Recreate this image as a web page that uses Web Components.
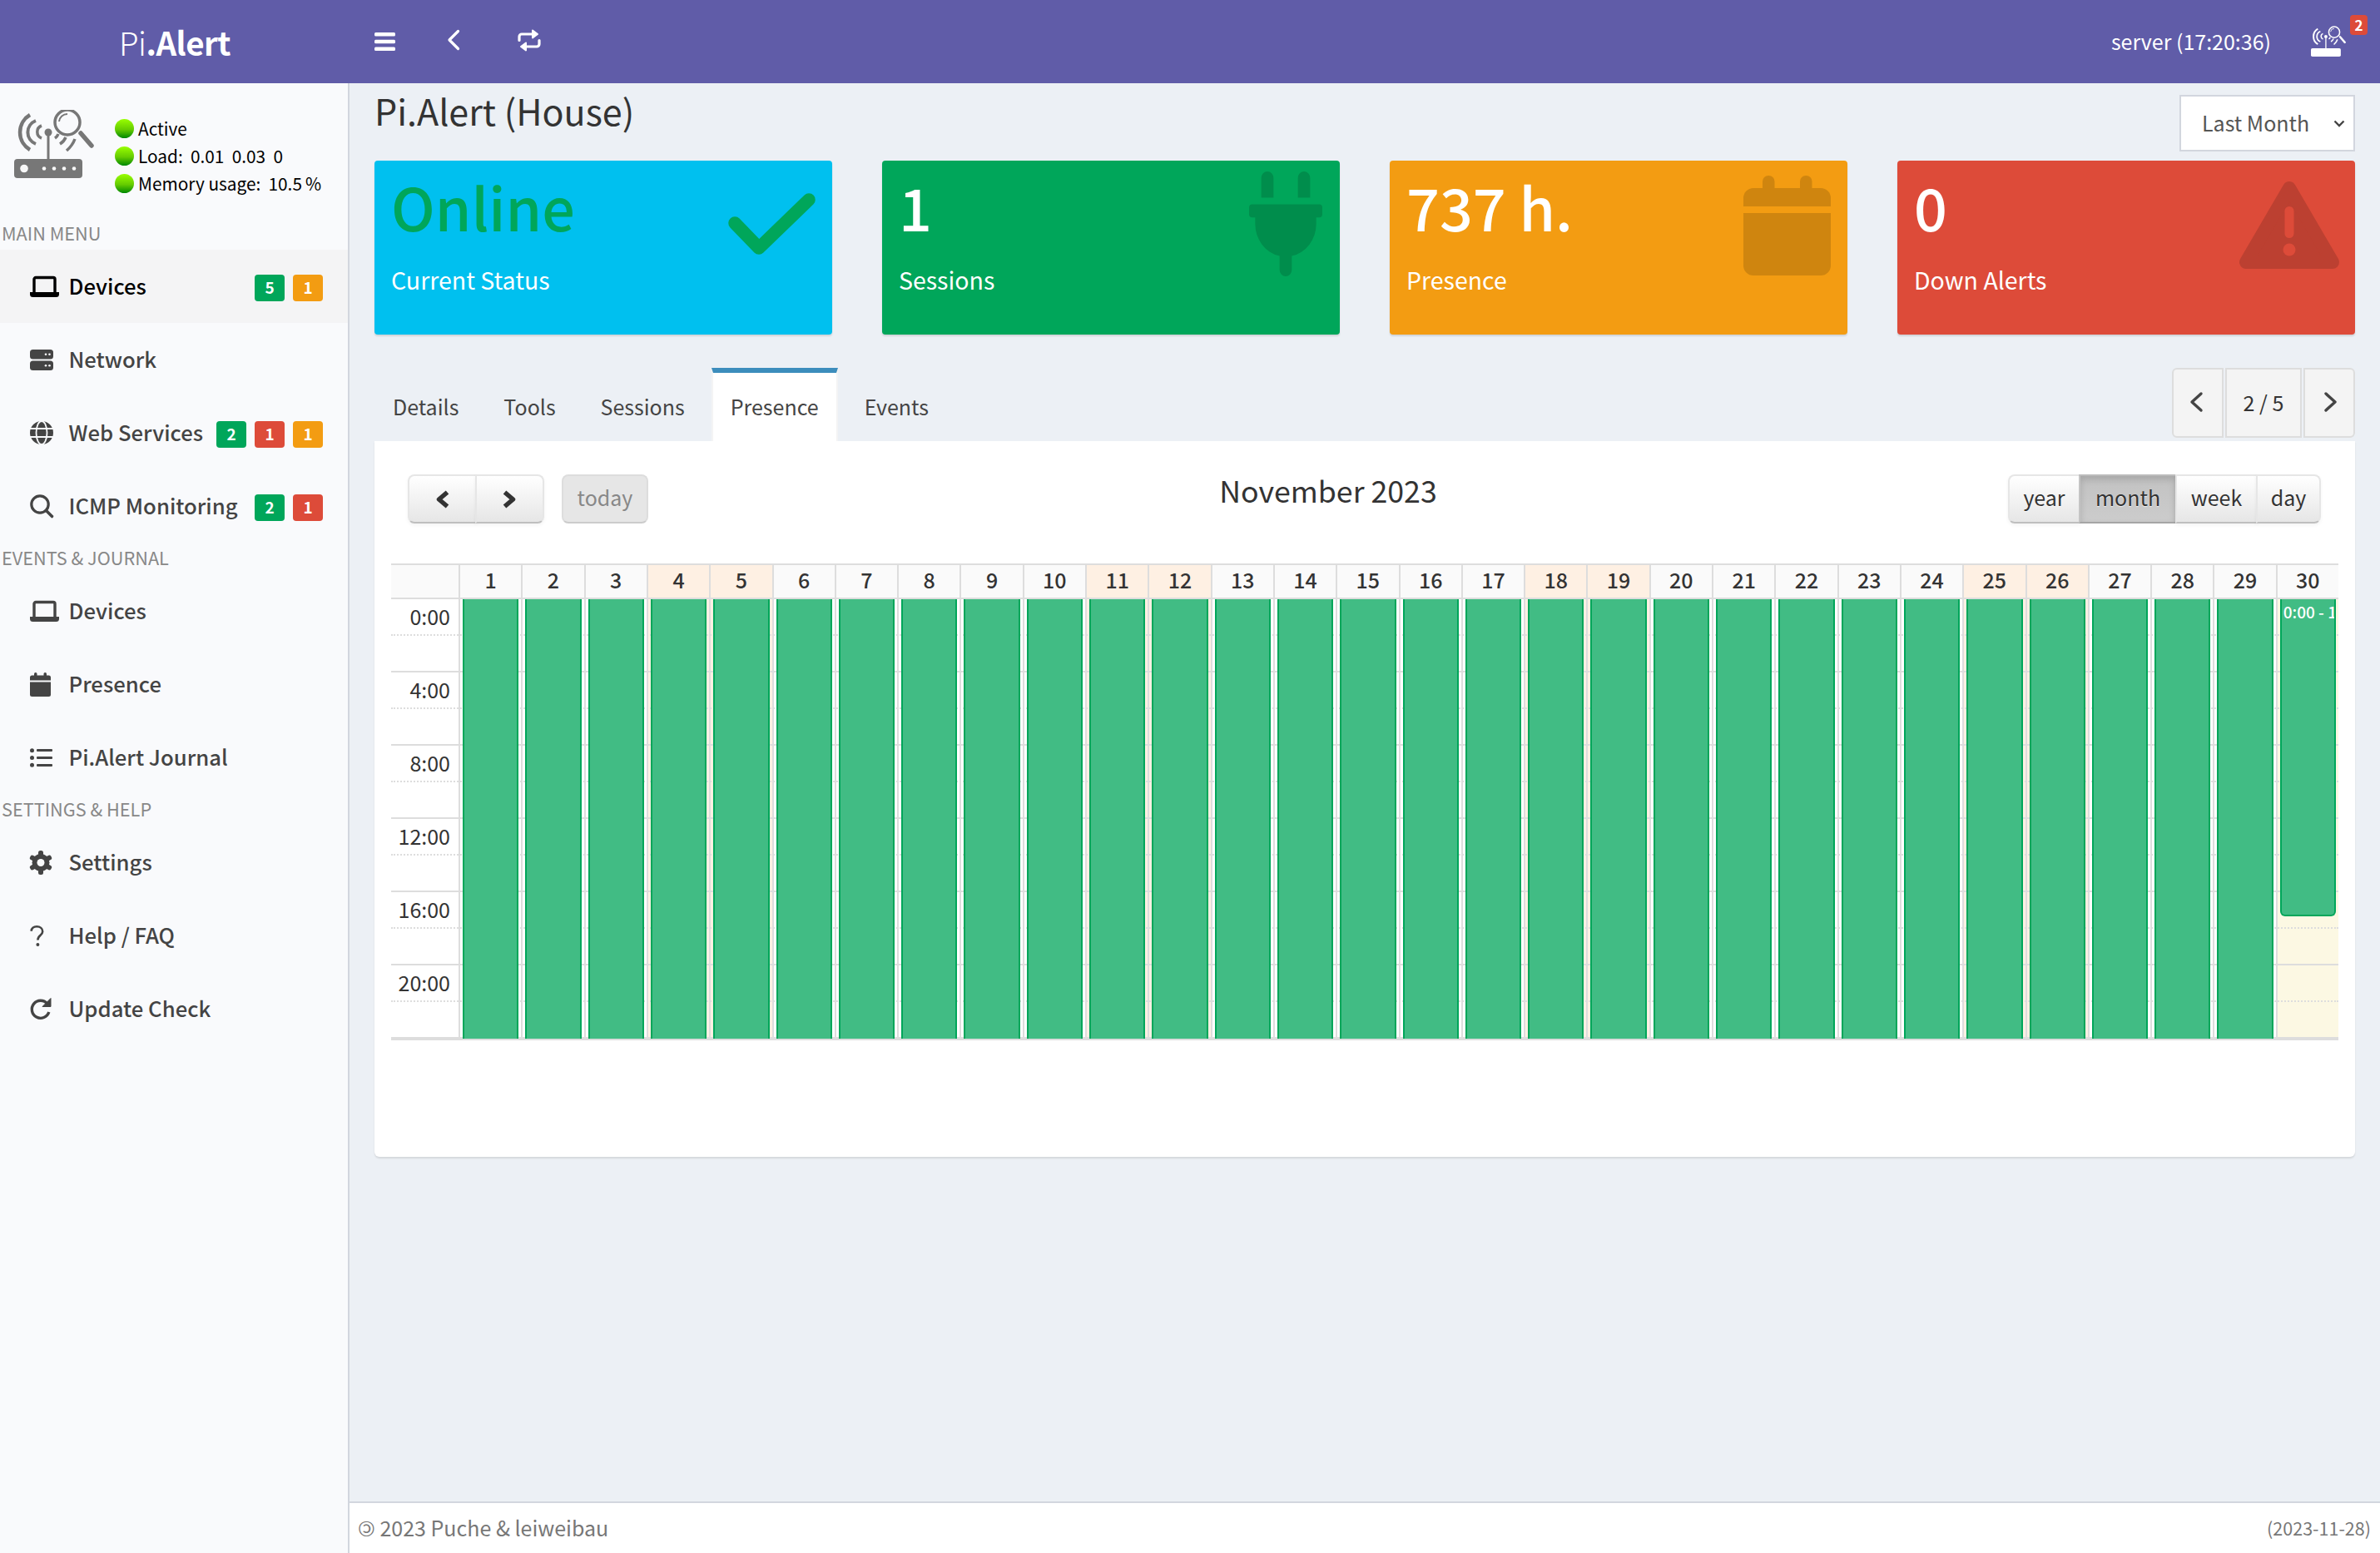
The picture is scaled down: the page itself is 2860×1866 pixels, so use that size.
<!DOCTYPE html>
<html lang="en">
<head>
<meta charset="utf-8">
<title>Pi.Alert</title>
<style>
    html, body { margin:0; padding:0; }
    body { font-family:"Noto Sans CJK SC", "Noto Sans", sans-serif; }
</style>
</head>
<body>
<pi-app></pi-app>

<script>
const FONT = `"Noto Sans CJK SC", "Noto Sans", sans-serif`;

// Icons are drawn on their pixel size in the 2860 wide layout
const ICONS = {
    laptop: [35, 25, `<path d="M5 19V3.5A2 2 0 0 1 7 1.5H28A2 2 0 0 1 30 3.5V19" fill="none" stroke="currentColor" stroke-width="3.4"/><path d="M0 19H35V21.5A3.5 3.5 0 0 1 31.5 25H3.5A3.5 3.5 0 0 1 0 21.5Z" fill="currentColor"/>`],
    server: [28, 25, `<rect width="28" height="11.5" rx="3.5" fill="currentColor"/><rect y="13.5" width="28" height="11.5" rx="3.5" fill="currentColor"/><g fill="#f9fafc"><circle cx="19" cy="5.8" r="1.3"/><circle cx="23.5" cy="5.8" r="1.3"/><circle cx="19" cy="19.3" r="1.3"/><circle cx="23.5" cy="19.3" r="1.3"/></g>`],
    globe: [28, 28, `<circle cx="14" cy="14" r="14" fill="currentColor"/><g fill="none" stroke="#f9fafc" stroke-width="1.8"><ellipse cx="14" cy="14" rx="6.5" ry="14"/><path d="M0 9H28M0 19H28"/></g>`],
    search: [28, 28, `<circle cx="12" cy="12" r="10.2" fill="none" stroke="currentColor" stroke-width="3.2"/><path d="M19.5 19.5L26.5 26.5" stroke="currentColor" stroke-width="3.6" stroke-linecap="round"/>`],
    calendar: [25, 29, `<rect x="5" width="3.5" height="7" rx="1.7" fill="currentColor"/><rect x="16.5" width="3.5" height="7" rx="1.7" fill="currentColor"/><path d="M0 9.5V6A2.5 2.5 0 0 1 2.5 3.5H22.5A2.5 2.5 0 0 1 25 6V9.5Z" fill="currentColor"/><path d="M0 11.5H25V26.5A2.5 2.5 0 0 1 22.5 29H2.5A2.5 2.5 0 0 1 0 26.5Z" fill="currentColor"/>`],
    list: [27, 23, `<g fill="currentColor"><circle cx="2.5" cy="2.7" r="2.5"/><circle cx="2.5" cy="11.5" r="2.5"/><circle cx="2.5" cy="20.3" r="2.5"/><rect x="8" y="1" width="19" height="3" rx="1"/><rect x="8" y="10" width="19" height="3" rx="1"/><rect x="8" y="19" width="19" height="3" rx="1"/></g>`],
    gear: [26, 29, `<g fill="currentColor"><circle cx="13" cy="14.5" r="10.5"/><rect x="10" y="0" width="6" height="29" rx="2.5"/><rect x="10" y="0" width="6" height="29" rx="2.5" transform="rotate(60 13 14.5)"/><rect x="10" y="0" width="6" height="29" rx="2.5" transform="rotate(120 13 14.5)"/></g><circle cx="13" cy="14.5" r="4.5" fill="#f9fafc"/>`],
    question: [17, 25, `<path d="M1.5 6.8C2 3.4 4.6 1.3 8.2 1.3C12.2 1.3 15.2 3.7 15.2 7.2C15.2 11.8 9.4 11.8 9.4 17.5" fill="none" stroke="currentColor" stroke-width="2.6"/><circle cx="9.4" cy="23" r="2" fill="currentColor"/>`],
    sync: [25, 26, `<path d="M20.8 7A10.5 10.5 0 1 0 22.8 17" fill="none" stroke="currentColor" stroke-width="3.4"/><path d="M15 10.5H25V0.5Z" fill="currentColor" stroke="currentColor" stroke-linejoin="round"/>`],
    bars: [25, 22, `<g fill="currentColor"><rect width="25" height="4.5" rx="1.5"/><rect y="8.7" width="25" height="4.5" rx="1.5"/><rect y="17.5" width="25" height="4.5" rx="1.5"/></g>`],
    back: [14, 24, `<path d="M12.5 1.5L2 12L12.5 22.5" fill="none" stroke="currentColor" stroke-width="3.2" stroke-linecap="round" stroke-linejoin="round"/>`],
    retweet: [28, 27, `<g fill="none" stroke="currentColor" stroke-width="3.2" stroke-linecap="round"><path d="M2 13.5V9A3 3 0 0 1 5 6H19"/><path d="M26 13.5V18A3 3 0 0 1 23 21H9"/></g><g fill="currentColor" stroke="currentColor" stroke-width="2" stroke-linejoin="round"><path d="M18 1.5L24 6L18 10.5Z"/><path d="M10 16.5L4 21L10 25.5Z"/></g>`],
    prev: [19, 22, `<path d="M15.5 2.5L5.5 11L15.5 19.5" fill="none" stroke="currentColor" stroke-width="5.5" stroke-linejoin="round"/>`],
    next: [19, 22, `<path d="M3.5 2.5L13.5 11L3.5 19.5" fill="none" stroke="currentColor" stroke-width="5.5" stroke-linejoin="round"/>`],
    left: [16, 24, `<path d="M14 2L3 12L14 22" fill="none" stroke="currentColor" stroke-width="3.4" stroke-linecap="round" stroke-linejoin="round"/>`],
    right: [16, 24, `<path d="M2 2L13 12L2 22" fill="none" stroke="currentColor" stroke-width="3.4" stroke-linecap="round" stroke-linejoin="round"/>`],
    check: [105, 75, `<path d="M8 35L37 65L97 7" fill="none" stroke="currentColor" stroke-width="15.5" stroke-linecap="round" stroke-linejoin="round"/>`],
    plug: [88, 126, `<svg viewBox="0 0 384 512" width="88" height="126" preserveAspectRatio="none"><path fill="currentColor" d="M320,32a32,32,0,0,0-64,0v96h64Zm48,128H16A16,16,0,0,0,0,176v32a16,16,0,0,0,16,16H32v32A160.07,160.07,0,0,0,160,412.8V480a32,32,0,0,0,64,0V412.8A160.07,160.07,0,0,0,352,256V224h16a16,16,0,0,0,16-16V176A16,16,0,0,0,368,160ZM128,32a32,32,0,0,0-64,0v96h64Z"/></svg>`],
    bigcal: [105, 120, `<g fill="currentColor"><rect x="23" width="14.5" height="30" rx="7"/><rect x="68" width="14.5" height="30" rx="7"/><path d="M0 37V27A12 12 0 0 1 12 15H93A12 12 0 0 1 105 27V37Z"/><path d="M0 45H105V108A12 12 0 0 1 93 120H12A12 12 0 0 1 0 108Z"/></g>`],
    warning: [120, 106, `<path d="M60 8L8 97H112Z" fill="currentColor" stroke="currentColor" stroke-width="16" stroke-linejoin="round"/><rect x="54.5" y="30" width="11" height="38" rx="5.5" fill="var(--hole)"/><circle cx="60" cy="82" r="7.5" fill="var(--hole)"/>`]
};

class UiIcon extends HTMLElement {
    static get observedAttributes() { return ["name"]; }
    constructor() {
        super();
        this._shadow = this.attachShadow({ mode: "open" });
    }
    connectedCallback() { this._render(); }
    attributeChangedCallback() { this._render(); }
    _render() {
        const icon = ICONS[this.getAttribute("name")];
        if (!icon) return;
        const [w, h, body] = icon;
        this._shadow.innerHTML = `<style>:host{display:block;line-height:0;width:${w}px;height:${h}px} svg{display:block;overflow:visible}</style>
            <svg width="${w}" height="${h}" viewBox="0 0 ${w} ${h}">${body}</svg>`;
    }
}

// The router with the magnifying glass, sidebar and top bar use the same drawing
class RouterLogo extends HTMLElement {
    constructor() {
        super();
        this._shadow = this.attachShadow({ mode: "open" });
        this._shadow.innerHTML = `
        <style>:host{display:block;line-height:0;color:#777} svg{display:block;width:100%;height:100%}</style>
        <svg viewBox="17 132 96 82">
            <g fill="none" stroke="currentColor">
                <path d="M50 151A8 8 0 0 0 50 166" stroke-width="3.5"/>
                <path d="M43 145A15 15 0 0 0 43 173" stroke-width="4"/>
                <path d="M36 138A24.400 24.400 0 0 0 36 180" stroke-width="4.5"/>
                <circle cx="81" cy="147" r="15" stroke-width="3.5"/>
                <path d="M66 166Q69 164 70 161M72 173Q77 170 79 165M80 181Q87 175 90 167" stroke-width="3.5"/>
                <path d="M97 160L110 175" stroke-width="5.5" stroke-linecap="round"/>
                <path d="M71 146A10 10 0 0 1 81 137" stroke-width="2"/>
            </g>
            <path d="M58 159V191" stroke="currentColor" stroke-width="3"/>
            <circle cx="58" cy="159" r="4.5" fill="currentColor"/>
            <rect x="17" y="191" width="82" height="23" rx="4" fill="currentColor"/>
            <g fill="#fff" opacity=".95"><circle cx="29" cy="202.500" r="4.800"/><circle cx="53" cy="202.500" r="2.300"/><circle cx="65" cy="202.500" r="2.300"/><circle cx="77" cy="202.500" r="2.300"/><circle cx="89" cy="202.500" r="2.300"/></g>
        </svg>`;
    }
}

const topbarTpl = document.createElement("template");
topbarTpl.innerHTML = `
<style>
    :host { display:flex; align-items:center; height:100px; background:#605ca8; color:#fff; font-family:${FONT}; }
    .logo { width:420px; text-align:center; font-size:38.5px; line-height:96px; font-weight:700; letter-spacing:-.5px; }
    .logo span { font-weight:300; }
    .tool { display:flex; align-items:center; }
    .bars { margin-left:30px; }
    .back { margin-left:63px; margin-top:-4px; }
    .retweet { margin-left:70px; margin-top:-4px; }
    .server { margin-left:auto; margin-top:-3px; font-size:25px; line-height:38px; }
    .bell { position:relative; width:42px; height:38px; margin-left:48px; margin-right:41px; color:#fff; }
    .bell router-logo { color:#fff; width:42px; height:38px; }
    .count { position:absolute; left:47px; top:-13px; width:21px; height:24px; border-radius:4px; background:#dd4b39;
             font-size:17px; font-weight:700; line-height:24px; text-align:center; }
</style>
<div class="logo"><span>Pi</span>.Alert</div>
<ui-icon class="tool bars" name="bars"></ui-icon>
<ui-icon class="tool back" name="back"></ui-icon>
<ui-icon class="tool retweet" name="retweet"></ui-icon>
<div class="server">server (17:20:36)</div>
<div class="bell"><router-logo></router-logo><span class="count">2</span></div>
`;
class AppTopbar extends HTMLElement {
    constructor() {
        super();
        this._shadow = this.attachShadow({ mode: "open" });
        this._shadow.appendChild(topbarTpl.content.cloneNode(true));
    }
}

class NavBadge extends HTMLElement {
    constructor() {
        super();
        this._shadow = this.attachShadow({ mode: "open" });
        this._shadow.innerHTML = `<style>:host{display:block;width:36px;height:32px;margin-left:10px;border-radius:4px;background:var(--c,#00a65a);
            color:#fff;font-size:19px;font-weight:700;line-height:30px;text-align:center}</style><slot></slot>`;
    }
    connectedCallback() {
        this.style.setProperty("--c", { g: "#00a65a", o: "#f39c12", r: "#dd4b39" }[this.getAttribute("tone")]);
    }
}

const navItemTpl = document.createElement("template");
navItemTpl.innerHTML = `
<style>
    :host { display:flex; align-items:center; height:88px; padding:0 30px 0 36px; color:#444; }
    :host([active]) { background:#f4f4f5; color:#000; }
    .ic { width:46.5px; flex:none; }
    .label { flex:1; margin-top:-3px; font-size:25.7px; line-height:34px; font-weight:500; white-space:nowrap; }
    .badges { display:flex; margin-top:4px; }
</style>
<div class="ic"><ui-icon></ui-icon></div>
<div class="label"></div>
<div class="badges"><slot></slot></div>
`;
class NavItem extends HTMLElement {
    constructor() {
        super();
        this._shadow = this.attachShadow({ mode: "open" });
        this._shadow.appendChild(navItemTpl.content.cloneNode(true));
    }
    connectedCallback() {
        this._shadow.querySelector("ui-icon").setAttribute("name", this.getAttribute("icon"));
        this._shadow.querySelector(".label").textContent = this.getAttribute("label");
    }
}

const sideTpl = document.createElement("template");
sideTpl.innerHTML = `
<style>
    :host { display:block; background:#f9fafc; border-right:2px solid #d2d6de; font-family:${FONT}; }
    .status { display:flex; height:162px; box-sizing:border-box; padding:32px 0 0 17px; }
    .status router-logo { width:96px; height:82px; flex:none; }
    .lines { margin:6px 0 0 25px; font-size:20.8px; line-height:33px; color:#000; }
    .line { display:flex; align-items:center; white-space:pre; }
    .dot { width:23px; height:23px; border-radius:50%; margin-right:5px; background:linear-gradient(#9f0, #6c0 55%, #080); }
    .head { height:38px; padding-left:2px; font-size:21.7px; line-height:36px; color:#888; text-transform:uppercase; }
</style>
<div class="status">
    <router-logo></router-logo>
    <div class="lines">
        <div class="line"><span class="dot"></span>Active</div>
        <div class="line"><span class="dot"></span>Load:  0.01  0.03  0</div>
        <div class="line"><span class="dot"></span>Memory usage:  10.5&#8201;%</div>
    </div>
</div>
<div class="head">Main Menu</div>
<nav-item active icon="laptop" label="Devices"><nav-badge tone="g">5</nav-badge><nav-badge tone="o">1</nav-badge></nav-item>
<nav-item icon="server" label="Network"></nav-item>
<nav-item icon="globe" label="Web Services"><nav-badge tone="g">2</nav-badge><nav-badge tone="r">1</nav-badge><nav-badge tone="o">1</nav-badge></nav-item>
<nav-item icon="search" label="ICMP Monitoring"><nav-badge tone="g">2</nav-badge><nav-badge tone="r">1</nav-badge></nav-item>
<div class="head">Events &amp; Journal</div>
<nav-item icon="laptop" label="Devices"></nav-item>
<nav-item icon="calendar" label="Presence"></nav-item>
<nav-item icon="list" label="Pi.Alert Journal"></nav-item>
<div class="head">Settings &amp; Help</div>
<nav-item icon="gear" label="Settings"></nav-item>
<nav-item icon="question" label="Help / FAQ"></nav-item>
<nav-item icon="sync" label="Update Check"></nav-item>
`;
class SideNav extends HTMLElement {
    constructor() {
        super();
        this._shadow = this.attachShadow({ mode: "open" });
        this._shadow.appendChild(sideTpl.content.cloneNode(true));
    }
}

const cardTpl = document.createElement("template");
cardTpl.innerHTML = `
<style>
    :host { display:block; position:relative; height:209px; box-sizing:border-box; padding:20px 20px 0 20px; border-radius:4px;
            background:var(--bg); color:#fff; box-shadow:0 2px 2px rgba(0,0,0,.12); }
    .value { font-size:70px; line-height:70px; font-weight:500; color:var(--val,#fff); white-space:nowrap; }
    .label { margin-top:33px; font-size:28.5px; line-height:40px; }
    .icon { position:absolute; color:var(--ic); --hole:var(--bg); }
</style>
<div class="value"></div>
<div class="label"></div>
<ui-icon class="icon"></ui-icon>
`;
class StatCard extends HTMLElement {
    constructor() {
        super();
        this._shadow = this.attachShadow({ mode: "open" });
        this._shadow.appendChild(cardTpl.content.cloneNode(true));
    }
    connectedCallback() {
        this._shadow.querySelector(".value").textContent = this.getAttribute("value");
        this._shadow.querySelector(".label").textContent = this.getAttribute("label");
        const icon = this._shadow.querySelector(".icon");
        icon.setAttribute("name", this.getAttribute("icon"));
        const [right, top] = this.getAttribute("icon-at").split(",");
        icon.style.right = right + "px";
        icon.style.top = top + "px";
    }
}

const calendarTpl = document.createElement("template");
calendarTpl.innerHTML = `
<style>
    :host { display:block; height:860px; box-sizing:border-box; padding:40px 20px 0; background:#fff; color:#333;
            border-radius:0 0 6px 6px; box-shadow:0 2px 2px rgba(0,0,0,.1); }
    .bar { display:flex; justify-content:space-between; align-items:flex-start; height:59px; margin:0 21px 48px 20px; }
    .group { display:flex; }
    button { font:inherit; font-size:25px; line-height:32px; height:59px; box-sizing:border-box; padding:0 0 5px; margin:0; color:#333; cursor:pointer;
             border:2px solid #e6e6e6; border-bottom-color:#bfbfbf; background:linear-gradient(#fff, #e6e6e6);
             box-shadow:inset 0 2px 0 rgba(255,255,255,.2), 0 2px 4px rgba(0,0,0,.05); text-shadow:0 1px 1px rgba(255,255,255,.75); }
    button + button { margin-left:-2px; }
    button:first-child { border-radius:8px 0 0 8px; }
    button:last-child { border-radius:0 8px 8px 0; }
    .arrow { display:flex; align-items:center; justify-content:center; width:83px; padding:0; }
    .today { width:104px; border-radius:8px !important; background:#e6e6e6; color:#888; box-shadow:none; border-color:#ddd; border-bottom-color:#ccc; text-shadow:none; }
    .left { gap:21px; }
    .active { background:#ccc; background-image:linear-gradient(#c2c2c2, #ccc); border-color:#bbb #c4c4c4 #a5a5a5; box-shadow:inset 0 4px 8px rgba(0,0,0,.15); }
    h2 { margin:-3px 0 0; font-size:35.7px; line-height:44px; font-weight:400; color:#333; }
    .head, .cols, .events { display:grid; grid-template-columns:81px repeat(30, 1fr); }
    .head { border-top:2px solid #ddd; border-bottom:2px solid #ddd; height:39px; }
    .head div { background:#fafafa; border-left:2px solid #ddd; text-align:center; font-size:25px; line-height:35px; font-weight:500; }
    .head div:first-child { border-left:0; }
    .head .we { background:#fef0e3; }
    .stack { display:grid; height:530px; border-bottom:2px solid #ddd; box-sizing:border-box; }
    .stack > * { grid-area:1 / 1; }
    .cols div { border-left:2px solid #ddd; }
    .cols div:first-child { border-left:0; background:#fff; }
    .cols .we { background:#fef0e3; }
    .cols .td { background:#fcf8e3; }
    .slats { display:grid; grid-auto-rows:44px; }
    .slat { box-sizing:border-box; border-bottom:2px dotted #ddd; font-size:25px; line-height:40px; }
    .slat:nth-child(even) { border-bottom-style:solid; }
    .slat span { display:block; width:71px; text-align:right; }
    .ev { box-sizing:border-box; margin:0 3px 0 5px; height:528px; background:#41bc84; border:solid #00a65a; border-width:0 2px; overflow:hidden; color:#fff;
          font-size:19px; line-height:30px; font-weight:500; white-space:nowrap; padding-left:2px; }
    .ev.end { height:381px; border-bottom-width:2px; border-radius:0 0 6px 6px; }
</style>
<div class="bar">
    <div class="group left">
        <div class="group"><button class="arrow"><ui-icon name="prev"></ui-icon></button><button class="arrow"><ui-icon name="next"></ui-icon></button></div>
        <button class="today">today</button>
    </div>
    <h2>November 2023</h2>
    <div class="group">
        <button style="width:87px">year</button><button class="active" style="width:118px">month</button><button style="width:99px">week</button><button style="width:78px">day</button>
    </div>
</div>
<div class="head"></div>
<div class="stack">
    <div class="cols"></div>
    <div class="slats"></div>
    <div class="events"></div>
</div>
`;
const WEEKEND = [4, 5, 11, 12, 18, 19, 25, 26];
class FcCalendar extends HTMLElement {
    constructor() {
        super();
        this._shadow = this.attachShadow({ mode: "open" });
        this._shadow.appendChild(calendarTpl.content.cloneNode(true));
    }
    connectedCallback() {
        const days = Array.from({ length: 30 }, (_, i) => i + 1);
        const cls = d => WEEKEND.includes(d) ? "we" : "";
        this._shadow.querySelector(".head").innerHTML = `<div></div>` + days.map(d => `<div class="${cls(d)}">${d}</div>`).join("");
        this._shadow.querySelector(".cols").innerHTML = `<div></div>` + days.map(d => `<div class="${d === 30 ? "td" : cls(d)}"></div>`).join("");
        let slats = "";
        for (let h = 0; h < 24; h += 4) {
            slats += `<div class="slat"><span>${h}:00</span></div><div class="slat"></div>`;
        }
        this._shadow.querySelector(".slats").innerHTML = slats;
        this._shadow.querySelector(".events").innerHTML = `<div></div>` + days.map(d =>
            d === 30 ? `<div class="ev end">0:00 - 17:20</div>` : `<div class="ev"></div>`).join("");
    }
}

const tabsTpl = document.createElement("template");
tabsTpl.innerHTML = `
<style>
    :host { display:flex; height:88px; font-size:25px; color:#444; }
    .tab { box-sizing:border-box; height:88px; padding:6px 22px 0; margin-right:10px; line-height:80px; }
    .tab.on { border-top:6px solid #3c8dbc; padding:0 21px; background:#fff; border-left:2px solid #f4f4f4; border-right:2px solid #f4f4f4; color:#444; }
    .pager { display:flex; margin-left:auto; height:84px; gap:2px; color:#333; }
    .pager div { display:flex; align-items:center; justify-content:center; box-sizing:border-box; border:2px solid #ddd; background:#f4f4f4; }
    .pager .p { width:62px; }
    .pager .p:first-child ui-icon { margin:-2px 4px 0 0; }
    .pager .p:last-child ui-icon { margin:-2px 0 0 4px; }
    .pager .n { width:92px; font-size:25px; padding-bottom:3px; }
    .pager div:first-child { border-radius:6px 0 0 6px; color:#444; }
    .pager div:last-child { border-radius:0 6px 6px 0; color:#444; }
</style>
<div class="tab">Details</div><div class="tab">Tools</div><div class="tab">Sessions</div><div class="tab on">Presence</div><div class="tab">Events</div>
<div class="pager">
    <div class="p"><ui-icon name="left"></ui-icon></div>
    <div class="n">2 / 5</div>
    <div class="p"><ui-icon name="right"></ui-icon></div>
</div>
`;
class TabStrip extends HTMLElement {
    constructor() {
        super();
        this._shadow = this.attachShadow({ mode: "open" });
        this._shadow.appendChild(tabsTpl.content.cloneNode(true));
    }
}

const footTpl = document.createElement("template");
footTpl.innerHTML = `
<style>
    :host { display:flex; justify-content:space-between; align-items:center; height:62px; box-sizing:border-box; padding:0 11px 2px 10px;
            background:#fff; border-top:2px solid #d2d6de; color:#777; font-size:25px; }
    .c { display:inline-block; transform:scaleX(-1); }
    .date { font-size:21.5px; }
</style>
<div><span class="c">©</span> 2023 Puche &amp; leiweibau</div>
<div class="date">(2023-11-28)</div>
`;
class AppFooter extends HTMLElement {
    constructor() {
        super();
        this._shadow = this.attachShadow({ mode: "open" });
        this._shadow.appendChild(footTpl.content.cloneNode(true));
    }
}

const appTpl = document.createElement("template");
appTpl.innerHTML = `
<style>
    :host { display:grid; grid-template-columns:420px 1fr; grid-template-rows:100px 1fr; width:2860px; height:1866px; overflow:hidden;
            background:#ecf0f5; font-family:${FONT}; }
    app-topbar { grid-column:1 / 3; }
    main { display:flex; flex-direction:column; min-width:0; }
    .content { flex:1; padding:5px 30px 0; }
    .title { display:flex; justify-content:space-between; align-items:flex-start; height:88px; }
    h1 { margin:3px 0 0; font-size:43px; line-height:48px; font-weight:400; color:#333; }
    select-box { margin-top:9px; }
    .cards { display:grid; grid-template-columns:repeat(4, 1fr); gap:60px; margin-bottom:40px; }
</style>
<app-topbar></app-topbar>
<side-nav></side-nav>
<main>
    <div class="content">
        <div class="title"><h1>Pi.Alert (House)</h1><select-box></select-box></div>
        <div class="cards">
            <stat-card style="--bg:#00c0ef;--val:#00a65a;--ic:#00a65a" value="Online" label="Current Status" icon="check" icon-at="20,40"></stat-card>
            <stat-card style="--bg:#00a65a;--ic:#008d4c" value="1" label="Sessions" icon="plug" icon-at="21,13"></stat-card>
            <stat-card style="--bg:#f39c12;--ic:#cf850f" value="737 h." label="Presence" icon="bigcal" icon-at="20,18"></stat-card>
            <stat-card style="--bg:#dd4b39;--ic:#bc4031" value="0" label="Down Alerts" icon="warning" icon-at="19,25"></stat-card>
        </div>
        <tab-strip></tab-strip>
        <fc-calendar></fc-calendar>
    </div>
    <app-footer></app-footer>
</main>
`;
class PiApp extends HTMLElement {
    constructor() {
        super();
        this._shadow = this.attachShadow({ mode: "open" });
        this._shadow.appendChild(appTpl.content.cloneNode(true));
    }
}

class SelectBox extends HTMLElement {
    constructor() {
        super();
        this._shadow = this.attachShadow({ mode: "open" });
        this._shadow.innerHTML = `
        <style>
            :host { display:flex; align-items:center; justify-content:space-between; box-sizing:border-box; width:211px; height:68px; padding:0 10px 2px 25px;
                    background:#fff; border:2px solid #d2d6de; color:#555; font-size:25px; }
            svg { display:block; margin-top:2px; }
        </style>
        <span>Last Month</span>
        <svg width="14" height="9" viewBox="0 0 14 9"><path d="M1.5 1.5L7 7L12.5 1.5" fill="none" stroke="#444" stroke-width="2.4"/></svg>`;
    }
}

customElements.define("ui-icon", UiIcon);
customElements.define("router-logo", RouterLogo);
customElements.define("app-topbar", AppTopbar);
customElements.define("nav-badge", NavBadge);
customElements.define("nav-item", NavItem);
customElements.define("side-nav", SideNav);
customElements.define("stat-card", StatCard);
customElements.define("fc-calendar", FcCalendar);
customElements.define("tab-strip", TabStrip);
customElements.define("app-footer", AppFooter);
customElements.define("select-box", SelectBox);
customElements.define("pi-app", PiApp);
</script>
</body>
</html>
